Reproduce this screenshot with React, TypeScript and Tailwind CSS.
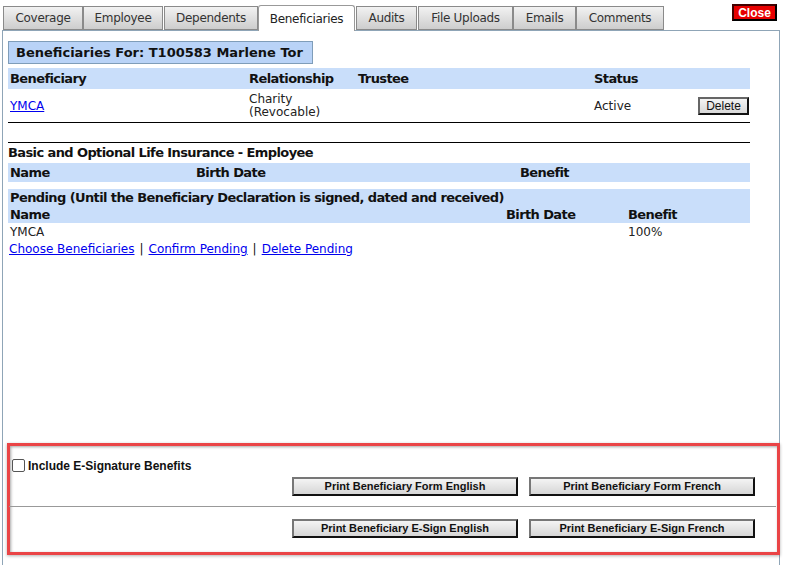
import React from "react";

const tabs = ["Coverage", "Employee", "Dependents", "Beneficiaries", "Audits", "File Uploads", "Emails", "Comments"];
const tabW = [80, 80, 94, 97, 61, 95, 63, 88];
const tabMr = [0, 1, 0, 1, 1, 0, 0, 0];

function GrayBtn({ label, w }: { label: string; w: string }) {
  return (
    <button
      className={`${w} h-[19px] border-2 border-t-[#777] border-l-[#777] border-r-[#111] border-b-[#111] bg-gradient-to-b from-[#f4f4f4] to-[#d6d6d6] text-[11px] font-bold text-[#111] leading-none flex items-center justify-center`}
      style={{ fontFamily: "'Liberation Sans', Arial, sans-serif" }}
    >
      {label}
    </button>
  );
}

export default function App() {
  return (
    <div
      className="w-[791px] h-[565px] bg-white overflow-hidden flex flex-col text-[#111]"
      style={{ fontFamily: "'DejaVu Sans', Verdana, sans-serif" }}
    >
      {/* tab bar */}
      <div className="flex items-end h-[30px] pl-[3px] relative z-10">
        {tabs.map((t, i) => {
          const active = t === "Beneficiaries";
          return (
            <div
              key={t}
              style={{ width: tabW[i], marginRight: tabMr[i] }}
              className={
                active
                  ? "h-[26px] -mb-px bg-white border border-[#999] border-b-0 rounded-t-[3px] flex items-center justify-center text-[12px] text-[#222]"
                  : "h-[24px] bg-gradient-to-b from-[#f2f2f2] to-[#cdcdcd] border border-[#8a8a8a] flex items-center justify-center text-[12px] text-[#333]"
              }
            >
              <span className="tracking-[-0.3px]">{t}</span>
            </div>
          );
        })}
        <div className="flex-1" />
        <div className="self-start mt-[4px] mr-[14px] h-[17px] w-[45px] bg-[#e80000] border-2 border-t-[#400] border-l-[#400] border-r-black border-b-black flex items-center justify-center text-white font-bold text-[12px] leading-none" style={{ fontFamily: "'Liberation Sans', Arial, sans-serif" }}>
          Close
        </div>
      </div>

      {/* panel */}
      <div className="ml-[2px] w-[778px] flex-1 border border-[#8fa5b7] border-b-0 flex flex-col">
        <div className="pl-[5px] pr-[29px] pt-[10px] text-[12px]">
          <div className="w-[305px] h-[23px] bg-[#b9d3f7] border border-[#7f9db9] flex items-center pl-[7px] font-bold text-[13px]">
            Beneficiaries For: T100583 Marlene Tor
          </div>

          <div className="mt-[4px] h-[21px] bg-[#c9defa] flex items-center font-bold text-[13px] tracking-[-0.6px]">
            <span className="w-[241px] pl-[2px]">Beneficiary</span>
            <span className="w-[109px]">Relationship</span>
            <span className="w-[236px]">Trustee</span>
            <span>Status</span>
          </div>
          <div className="h-[33px] flex items-center text-[12px]">
            <span className="w-[241px] pl-[2px]">
              <a className="text-[#0000ee] underline">YMCA</a>
            </span>
            <span className="w-[345px] leading-[13px] text-[#222]">
              Charity
              <br />
              (Revocable)
            </span>
            <span className="w-[104px] text-[#222]">Active</span>
            <button
              className="h-[18px] w-[51px] border-2 border-t-[#666] border-l-[#666] border-r-[#111] border-b-[#111] bg-gradient-to-b from-[#f4f4f4] to-[#d8d8d8] text-[12px] leading-none"
              style={{ fontFamily: "'Liberation Sans', Arial, sans-serif" }}
            >
              Delete
            </button>
          </div>
          <div className="border-t border-black" />
          <div className="h-[19px]" />
          <div className="border-t border-black" />
          <div className="h-[20px] flex items-center font-bold text-[13px] tracking-[-0.6px]">
            Basic and Optional Life Insurance - Employee
          </div>
          <div className="h-[19px] bg-[#c9defa] flex items-center font-bold text-[13px] tracking-[-0.6px]">
            <span className="w-[188px] pl-[2px]">Name</span>
            <span className="w-[324px]">Birth Date</span>
            <span>Benefit</span>
          </div>
          <div className="h-[7px]" />
          <div className="bg-[#c9defa] font-bold text-[13px] tracking-[-0.6px]">
            <div className="h-[17px] flex items-center pl-[2px]">
              Pending (Until the Beneficiary Declaration is signed, dated and received)
            </div>
            <div className="h-[17px] flex items-center">
              <span className="w-[498px] pl-[2px]">Name</span>
              <span className="w-[122px]">Birth Date</span>
              <span>Benefit</span>
            </div>
          </div>
          <div className="h-[17px] flex items-center text-[12px] text-[#222]">
            <span className="w-[620px] pl-[2px]">YMCA</span>
            <span>100%</span>
          </div>
          <div className="h-[17px] flex items-center text-[12px] pl-[1px]">
            <a className="text-[#0000ee] underline">Choose Beneficiaries</a>
            <span className="mx-[5px]">|</span>
            <a className="text-[#0000ee] underline">Confirm Pending</a>
            <span className="mx-[5px]">|</span>
            <a className="text-[#0000ee] underline">Delete Pending</a>
          </div>
        </div>

        <div className="flex-1" />

        {/* highlighted bottom section */}
        <div className="ml-[4px] mb-[10px] w-[773px] h-[112px] border-[3px] border-[#ea4446] shadow-[inset_1px_1px_3px_rgba(0,0,0,0.35),0_1px_3px_rgba(0,0,0,0.3)] flex flex-col" style={{ fontFamily: "'Liberation Sans', Arial, sans-serif" }}>
          <div className="pt-[13px] pl-[2px] flex items-center h-[26px]">
            <span className="w-[13px] h-[13px] border border-[#555] rounded-[2px] bg-white" />
            <span className="ml-[3px] text-[12px] font-bold text-[#111] leading-none">Include E-Signature Benefits</span>
          </div>
          <div className="mt-[5px] flex pl-[282px] gap-[11px]">
            <GrayBtn label="Print Beneficiary Form English" w="w-[226px]" />
            <GrayBtn label="Print Beneficiary Form French" w="w-[226px]" />
          </div>
          <div className="mt-[10px] ml-[-1px] mr-[1px] border-t border-[#999]" />
          <div className="mt-[12px] flex pl-[282px] gap-[11px]">
            <GrayBtn label="Print Beneficiary E-Sign English" w="w-[226px]" />
            <GrayBtn label="Print Beneficiary E-Sign French" w="w-[226px]" />
          </div>
        </div>
      </div>
    </div>
  );
}
